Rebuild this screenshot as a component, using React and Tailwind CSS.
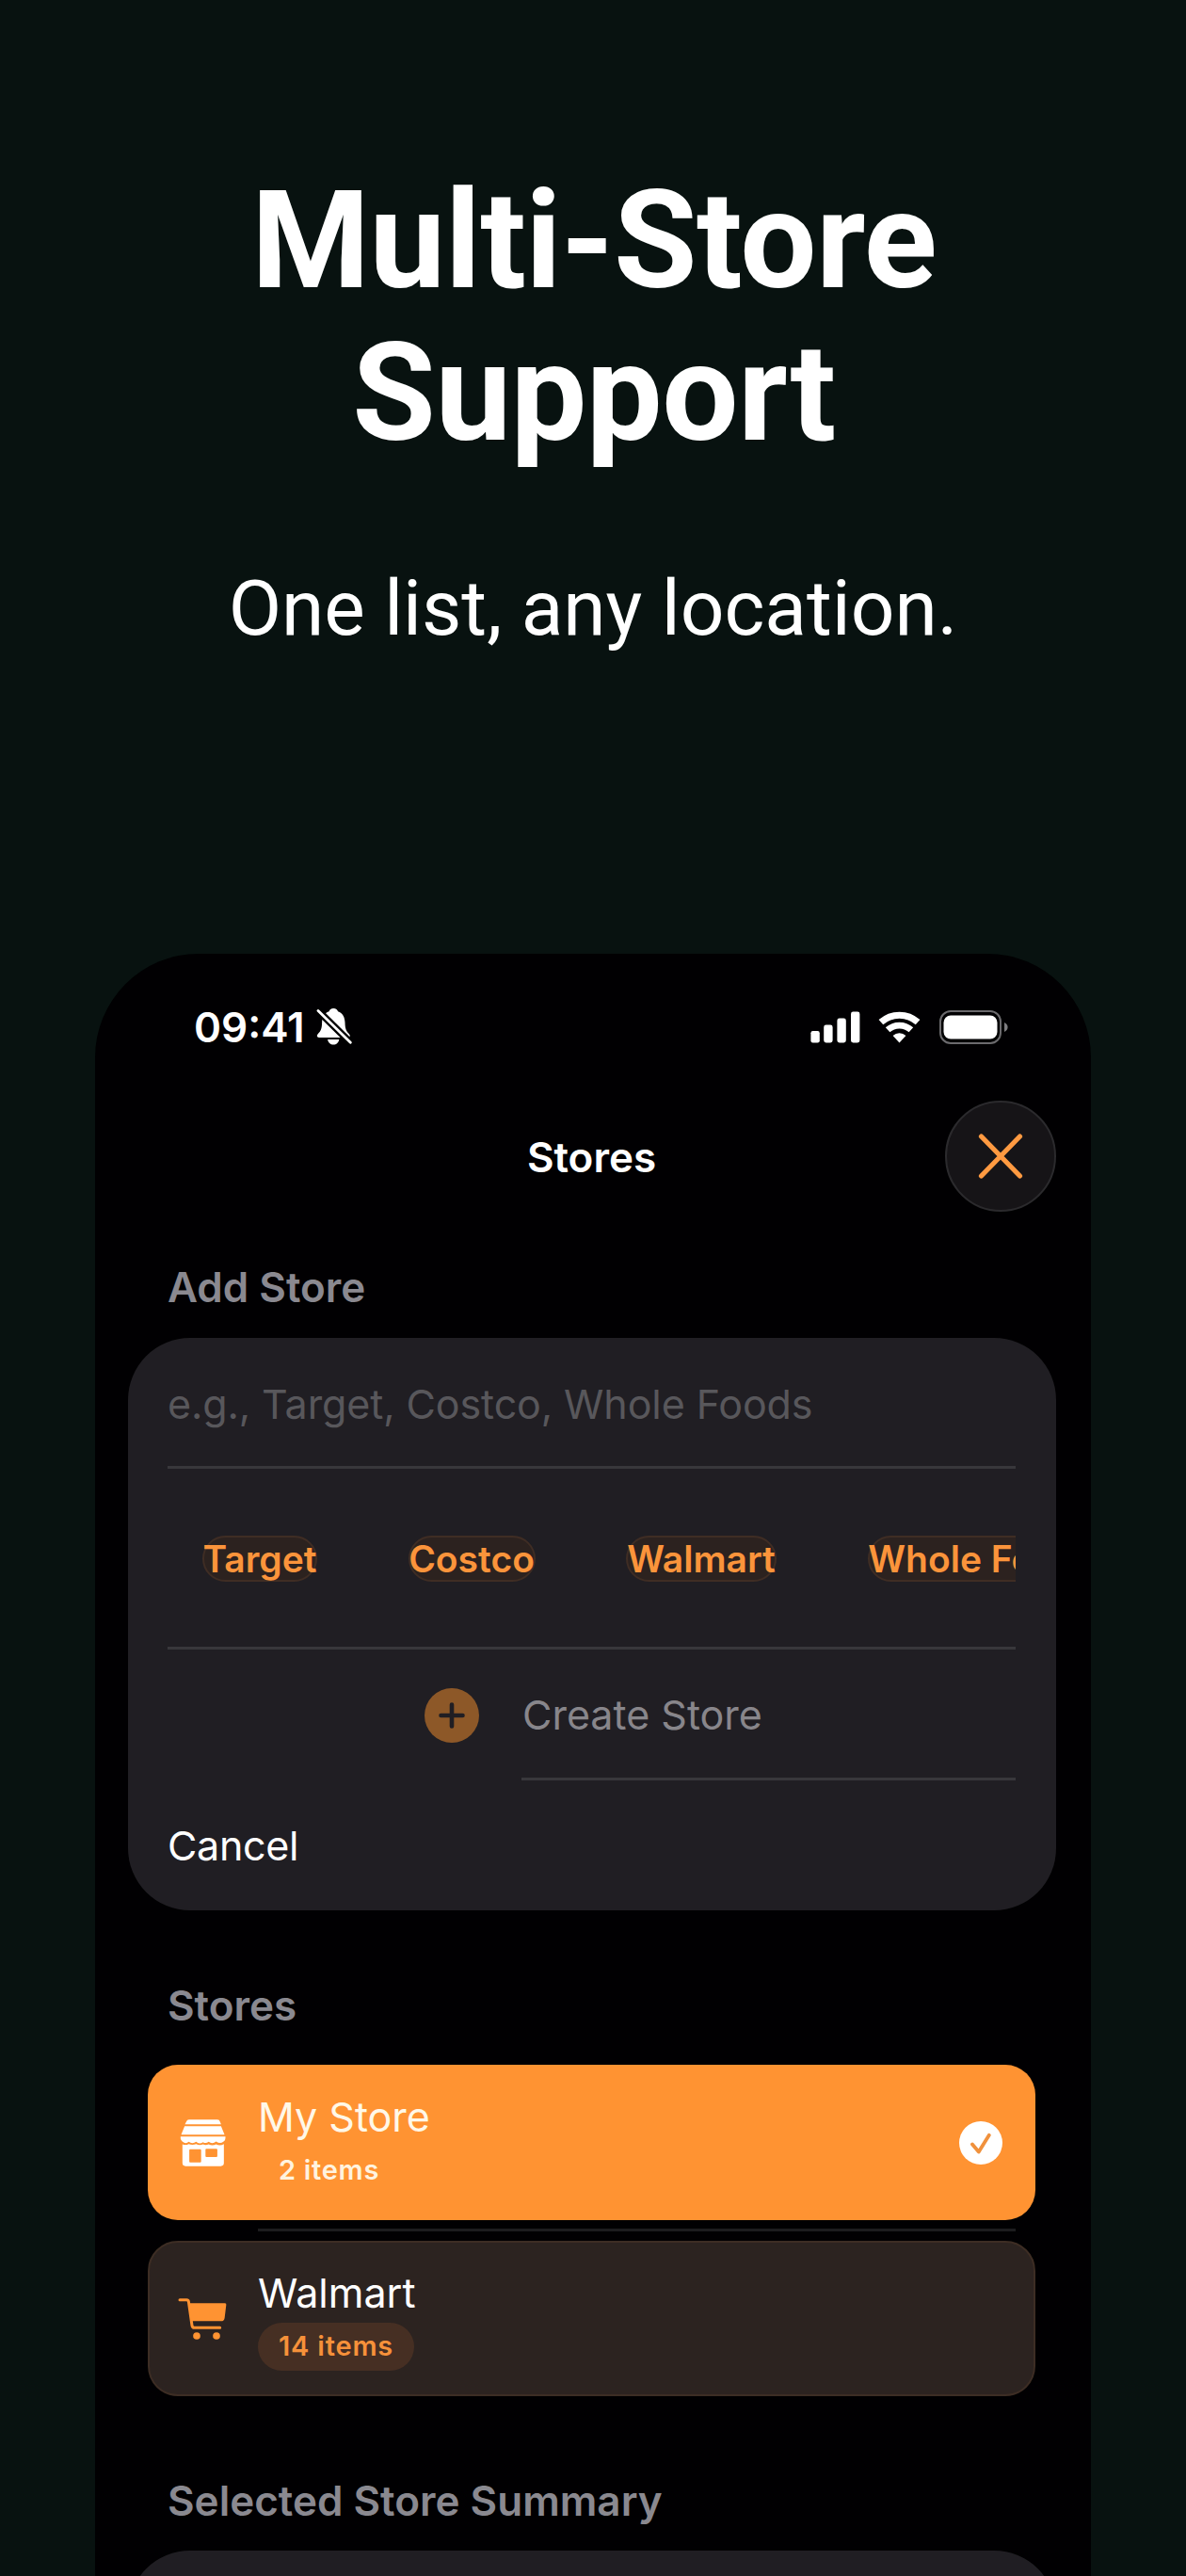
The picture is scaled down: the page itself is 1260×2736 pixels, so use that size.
import React from 'react';

const suggestions = [
  { name: 'Target', width: 'w-[122px]' },
  { name: 'Costco', width: 'w-[135px]' },
  { name: 'Walmart', width: 'w-[160px]' },
  { name: 'Whole Foods', width: 'w-[247px]' },
];

const BellOffIcon = () => (
  <svg width="38" height="40" viewBox="335.5 1072 38 40" fill="white">
    <path d="M353.8 1072c2.6 0 4.300 1.300 4.700 3.200c5.200 1.800 7.300 6.300 7.500 11.800c.2 7 1.200 9 4.400 12.300c1.600 1.700 .8 3.700-1.200 3.700H338.400c-2 0-2.800-2-1.200-3.700c3.200-3.300 4.200-5.300 4.400-12.300c.2-5.500 2.300-10 7.500-11.800c.4-1.900 2.100-3.200 4.700-3.200z" />
    <path d="M347.600 1105h12.200c-.5 3.300-3 5.600-6.100 5.600s-5.600-2.300-6.100-5.600z" />
    <path d="M335 1072L374 1110.500" stroke="black" strokeWidth="7.500" />
    <path d="M337.500 1074.500L371.800 1108.300" stroke="white" strokeWidth="2.800" strokeLinecap="round" />
  </svg>
);

const SignalIcon = () => (
  <svg width="53" height="34" viewBox="0 0 53 34" fill="white">
    <rect x="0.400" y="21" width="9.400" height="12.500" rx="2.200" />
    <rect x="14.200" y="14.500" width="9.400" height="19" rx="2.400" />
    <rect x="28.400" y="7.500" width="9.400" height="26" rx="2.400" />
    <rect x="43" y="0.500" width="9.400" height="33" rx="2.400" />
  </svg>
);

const WifiIcon = () => (
  <svg width="45" height="34" viewBox="0 0 45 34" fill="none" stroke="white">
    <path d="M2.900 11.700A29.300 29.300 0 0 1 42.100 11.700" strokeWidth="7" />
    <path d="M10.100 19.800A18.500 18.500 0 0 1 34.900 19.800" strokeWidth="6.800" />
    <path d="M22.500 33.500L15.600 25.900A10.500 10.500 0 0 1 29.400 25.900z" fill="white" stroke="none" />
  </svg>
);

const BatteryIcon = () => (
  <svg width="73" height="36" viewBox="0 0 73 36" fill="none">
    <rect x="1" y="1" width="64" height="34" rx="11" stroke="#6b6a6d" strokeWidth="2" />
    <rect x="4.500" y="5.500" width="57" height="25" rx="7.500" fill="white" />
    <path d="M69 13v10c2.200-1 3.600-2.800 3.600-5s-1.400-4-3.600-5z" fill="#7d7c7f" />
  </svg>
);

const StorefrontIcon = () => (
  <svg width="49" height="50" viewBox="213 272 147 151" fill="white">
    <path d="M242 273h91q7 0 9 7l3 8H229l4-8q3-7 9-7z" />
    <path d="M228 294h117l11 27H217z" />
    <path d="M215 327h144q1 12-7 17q-10 8-23-1q-12 10-24 1q-9 7-18 1q-12 8-22-1q-12 8-24 0q-7 7-16 2q-12-7-10-19z" />
    <path fillRule="evenodd" d="M221 352q11 4 20-1q12 5 24 0q11 6 22 1q9 5 18 0q12 6 24 0q13 6 25-1v61q0 10-10 10H231q-10 0-10-10zM246 368q-3 0-3 3v36q0 3 3 3h32q3 0 3-3v-36q0-3-3-3zM298 366q-3 0-3 3v21q0 3 3 3h32q3 0 3-3v-21q0-3-3-3z" />
  </svg>
);

const CartIcon = () => (
  <svg width="52" height="46" viewBox="207 839 156 138">
    <path d="M213 847h22q5 0 6 5l11 77q1 7 8 7h81" fill="none" stroke="#ff9332" strokeWidth="9" strokeLinecap="round" strokeLinejoin="round" />
    <path d="M243 858H357q5 0 4 5l-5 41q-1 11-12 11H251z" fill="#ff9332" />
    <circle cx="267" cy="962" r="11.500" fill="#ff9332" />
    <circle cx="330" cy="962" r="11.500" fill="#ff9332" />
  </svg>
);

const CheckIcon = () => (
  <svg width="46" height="46" viewBox="0 0 46 46" fill="none">
    <circle cx="23" cy="23" r="23" fill="white" />
    <path d="M14 24.500L20.800 32.500L31.800 14.800" stroke="#f0913c" strokeWidth="3.800" strokeLinecap="round" strokeLinejoin="round" />
  </svg>
);

const App = () => {
  return (
    <div className="w-[1260px] h-[2736px] overflow-hidden bg-[#081210] text-white flex flex-col items-center">

      {/* HEADLINE */}
      <div className="w-full h-[1013px] shrink-0 pt-[175px] text-center font-['Roboto',sans-serif]">
        <h1 className="text-[144px] leading-[162px] font-bold tracking-[-0.6px] pl-[2px]">
          Multi-Store<br />Support
        </h1>
        <p className="mt-[98px] text-[82px] leading-[98px]">One list, any location.</p>
      </div>

      {/* PHONE */}
      <div className="w-[1058px] h-[1800px] shrink-0 rounded-t-[110px] bg-[#010002] overflow-hidden font-['Inter',sans-serif] text-[43px] tracking-[-0.1px]">

        {/* Status bar */}
        <div className="h-[156px] flex items-center justify-between pl-[105px] pr-[88px]">
          <div className="flex items-center gap-[12px]">
            <span className="text-[44px] leading-none font-semibold tracking-normal">09:41</span>
            <BellOffIcon />
          </div>
          <div className="flex items-center">
            <SignalIcon />
            <div className="ml-[19px]"><WifiIcon /></div>
            <div className="ml-[20px]"><BatteryIcon /></div>
          </div>
        </div>

        {/* Nav bar */}
        <div className="h-[118px] grid grid-cols-3 items-center px-[37px]">
          <div className="col-start-2 pt-[2px] pr-[3px] text-center text-[44px] tracking-normal font-semibold">Stores</div>
          <button className="justify-self-end w-[118px] h-[118px] rounded-full bg-[#161417] border-2 border-[#2b2a2d] flex items-center justify-center">
            <svg width="48" height="48" viewBox="0 0 48 48" stroke="#ff9a41" strokeWidth="5.200" strokeLinecap="round">
              <path d="M3.500 3L44.500 45M44.500 3L3.500 45" />
            </svg>
          </button>
        </div>

        <div className="h-[134px] pt-[26px] pl-[77px] flex items-center text-[44px] tracking-normal font-semibold text-[#8a8990]">Add Store</div>

        {/* Add store form */}
        <div className="ml-[35px] mr-[37px] h-[608px] rounded-[66px] bg-[#201e23] pl-[42px] pr-[43px]">
          <div className="h-[139px] border-b-[3px] border-[#38373b] flex items-center pt-[4px] text-[#58575b]">
            e.g., Target, Costco, Whole Foods
          </div>

          <div className="h-[192px] border-b-[3px] border-[#38373b] flex items-center gap-[96.5px] pl-[37px] pt-[2px] overflow-hidden">
            {suggestions.map((s) => (
              <div
                key={s.name}
                className={`${s.width} shrink-0 h-[49px] rounded-full border-2 border-[#3f2d24] bg-[#2c221f] flex items-center justify-center text-[39px] leading-none font-semibold tracking-normal whitespace-nowrap text-[#fb943b]`}
              >
                {s.name}
              </div>
            ))}
          </div>

          <div className="h-[139px] flex">
            <div className="w-[376px] flex items-center justify-end pr-[45px]">
              <svg width="58" height="58" viewBox="0 0 58 58">
                <circle cx="29" cy="29" r="29" fill="#8d5828" />
                <path d="M29 17.500V40.500M17.500 29H40.500" stroke="#201e23" strokeWidth="4.600" strokeLinecap="round" />
              </svg>
            </div>
            <div className="flex-1 border-b-[3px] border-[#38373b] flex items-center pt-[3px] pl-[1px] tracking-normal text-[#88868b]">
              Create Store
            </div>
          </div>

          <div className="h-[138px] flex items-center pt-[1px] tracking-[-0.3px]">Cancel</div>
        </div>

        <div className="h-[164px] pt-[38px] pl-[77px] flex items-center text-[44px] tracking-normal font-semibold text-[#8a8990]">Stores</div>

        {/* Store list */}
        <div className="ml-[56px] mr-[59px] tracking-normal">
          <div className="h-[165px] rounded-[32px] bg-[#ff9332] flex items-center pl-[34px] pr-[35px]">
            <StorefrontIcon />
            <div className="flex-1 pl-[34px]">
              <div className="leading-[54px] text-[#fff8e8]">My Store</div>
              <div className="w-fit h-[51px] mt-[5px] px-[22px] flex items-center text-[29px] tracking-[0.7px] font-semibold text-[#fff3df]">2 items</div>
            </div>
            <CheckIcon />
          </div>

          <div className="h-[22px] pl-[117px] pr-[21px] pt-[9px]">
            <div className="h-[3px] bg-[#1c1c1e]"></div>
          </div>

          <div className="h-[165px] rounded-[32px] border-2 border-[#3d2d24] bg-[#2c2320] flex items-center pl-[30px] pr-[33px]">
            <CartIcon />
            <div className="flex-1 pl-[33px]">
              <div className="leading-[54px]">Walmart</div>
              <div className="w-fit h-[51px] mt-[5px] px-[22px] rounded-full bg-[#462f23] flex items-center text-[29px] tracking-[0.8px] font-semibold text-[#f6913a]">14 items</div>
            </div>
          </div>
        </div>

        <div className="h-[164px] pt-[57px] pl-[77px] flex items-center text-[44px] tracking-normal font-semibold text-[#8a8990]">Selected Store Summary</div>
        <div className="ml-[35px] mr-[37px] h-[300px] rounded-[66px] bg-[#201e23]"></div>
      </div>
    </div>
  );
};

export default App;
